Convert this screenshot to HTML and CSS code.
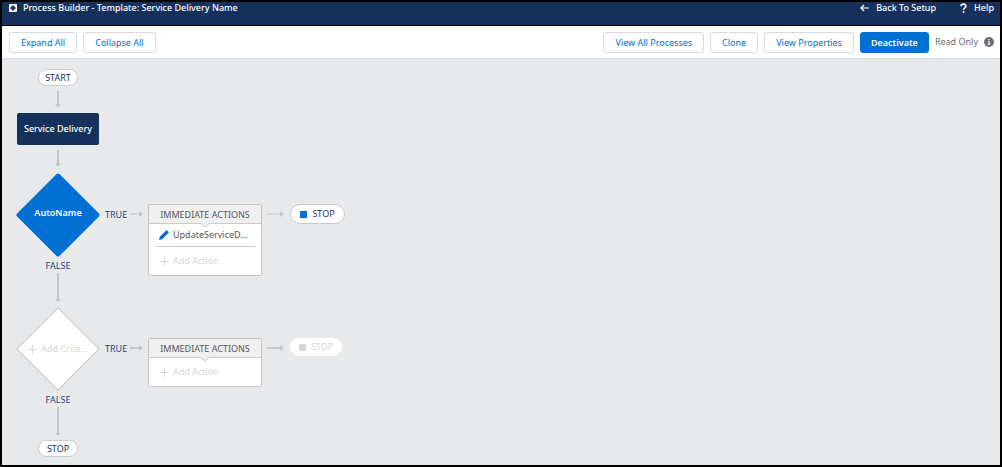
FILE: index.html
```html
<!DOCTYPE html>
<html lang="en">

<head>
    <meta charset="utf-8">
    <title>Process Builder</title>
    <link rel="stylesheet" href="styles.css">
</head>

<body>
    <header class="header">
        <svg class="logo" viewBox="0 0 8 8">
            <rect width="8" height="8" rx="1" fill="#fff" />
            <path d="M4 1L5.5 2.5 7 4 5.5 5.5 4 7 2.5 5.5 1 4 2.5 2.5z" fill="#16325c" />
            <path d="M3.5 3.5h1v1h-1z" fill="#fff" opacity=".3" />
        </svg>
        <h1 class="title">Process Builder - Template: Service Delivery Name</h1>
        <nav class="nav">
            <a href="#">
                <svg width="9" height="8" viewBox="0 0 9 8">
                    <path d="M9 4H1M4 1L1 4l3 3" fill="none" stroke="#fff" stroke-width="1.2" />
                </svg>
                Back To Setup
            </a>
            <a href="#">
                <svg width="7" height="10" viewBox="0 0 7 10">
                    <path d="M1 3.2C1 .4 6 .4 6 3.1 6 4.8 3.5 4.8 3.5 6.8" fill="none" stroke="#fff" stroke-width="1.6" />
                    <circle cx="3.5" cy="9" r="1" fill="#fff" />
                </svg>
                Help
            </a>
        </nav>
    </header>

    <div class="toolbar">
        <button class="btn">Expand All</button>
        <button class="btn">Collapse All</button>
        <div class="tools">
            <button class="btn">View All Processes</button>
            <button class="btn">Clone</button>
            <button class="btn">View Properties</button>
            <button class="btn primary">Deactivate</button>
            <span class="status">Read Only</span>
            <svg class="info" viewBox="0 0 10 10">
                <circle cx="5" cy="5" r="5" fill="#6b6d70" />
                <path d="M4.3 2h1.4v1.3H4.3zM4 4.2h1.7v2.6h.6v.9H3.8v-.9h.6V5H4z" fill="#fff" />
            </svg>
        </div>
    </div>

    <main class="canvas">
        <div class="column">
            <div class="pill">START</div>
            <svg class="arrow short" viewBox="0 0 6 17">
                <path d="M2 0h2v13h2L3 17 0 13h2z" />
            </svg>
            <div class="object">Service Delivery</div>
            <svg class="arrow short" viewBox="0 0 6 17">
                <path d="M2 0h2v13h2L3 17 0 13h2z" />
            </svg>
        </div>

        <div class="step">
            <div class="column">
                <div class="diamond">
                    <svg viewBox="0 0 84 84">
                        <path d="M42 2.5L81.5 42 42 81.5 2.5 42z" fill="#0070d2" stroke="#0070d2" stroke-width="4" stroke-linejoin="round" />
                    </svg>
                    <span class="name">AutoName</span>
                </div>
                <span class="label">FALSE</span>
                <svg class="arrow long" viewBox="0 0 6 29">
                    <path d="M2 0h2v26h2L3 29 0 26h2z" />
                </svg>
            </div>
            <div class="branch">
                <span class="label true">TRUE</span>
                <svg class="across in" viewBox="0 0 13 6">
                    <path d="M0 2.5h9V0l4 3-4 3V3.5H0z" />
                </svg>
                <div class="card">
                    <h2 class="card-title">IMMEDIATE ACTIONS</h2>
                    <svg class="notch" viewBox="0 0 10 5">
                        <path d="M0 0l5 4 5-4" />
                    </svg>
                    <a class="action" href="#">
                        <svg width="10" height="10" viewBox="0 0 10 10">
                            <path d="M0 10l.8-3.2L6.9.7q.7-.7 1.4 0l1 1q.7.7 0 1.4L3.2 9.2z" fill="#0070d2" />
                        </svg>
                        UpdateServiceD...
                    </a>
                    <button class="add">
                        <svg width="9" height="9" viewBox="0 0 9 9">
                            <path d="M4.5 0v9M0 4.5h9" stroke="#d4d6d8" />
                        </svg>
                        Add Action
                    </button>
                </div>
                <svg class="across out" viewBox="0 0 17 6">
                    <path d="M0 2.5h13V0l4 3-4 3V3.5H0z" />
                </svg>
                <div class="pill stop"><i class="square"></i>STOP</div>
            </div>
        </div>

        <div class="step">
            <div class="column">
                <div class="diamond">
                    <svg viewBox="0 0 84 84">
                        <path d="M42 2L82 42 42 82 2 42z" fill="#c9cbce" stroke="#c9cbce" stroke-width="3" stroke-linejoin="round" />
                        <path d="M42 3L81 42 42 81 3 42z" fill="#fff" stroke="#fff" stroke-width="2" stroke-linejoin="round" />
                    </svg>
                    <button class="add criteria">
                        <svg width="9" height="9" viewBox="0 0 9 9">
                            <path d="M4.5 0v9M0 4.5h9" stroke="#d4d6d8" />
                        </svg>
                        Add Crite...
                    </button>
                </div>
                <span class="label">FALSE</span>
                <svg class="arrow long" viewBox="0 0 6 29">
                    <path d="M2 0h2v26h2L3 29 0 26h2z" />
                </svg>
                <div class="pill">STOP</div>
            </div>
            <div class="branch">
                <span class="label true">TRUE</span>
                <svg class="across in" viewBox="0 0 13 6">
                    <path d="M0 2h9V0l4 3-4 3V4H0z" />
                </svg>
                <div class="card">
                    <h2 class="card-title">IMMEDIATE ACTIONS</h2>
                    <svg class="notch" viewBox="0 0 10 5">
                        <path d="M0 0l5 4 5-4" />
                    </svg>
                    <button class="add">
                        <svg width="9" height="9" viewBox="0 0 9 9">
                            <path d="M4.5 0v9M0 4.5h9" stroke="#d4d6d8" />
                        </svg>
                        Add Action
                    </button>
                </div>
                <svg class="across out" viewBox="0 0 17 6">
                    <path d="M0 2h13V0l4 3-4 3V4H0z" />
                </svg>
                <div class="pill stop off"><i class="square"></i>STOP</div>
            </div>
        </div>
    </main>
</body>

</html>
```
FILE: styles.css
```css
* {
    padding: 0;
    margin: 0;
    box-sizing: border-box;
}

body {
    display: flex;
    flex-direction: column;
    min-height: 100vh;
    border: 2px solid #000;
    background: #e8e9eb;
    font: 9px/12px "Noto Sans", "Open Sans", sans-serif;
    color: #16325c;
}

svg {
    flex: none;
    display: block;
}

a {
    color: inherit;
    text-decoration: none;
}

button {
    font: inherit;
    cursor: pointer;
}

/* top bar */
.header {
    display: flex;
    align-items: flex-start;
    height: 24px;
    padding: 0 6px 0 7px;
    border-bottom: 1px solid #000;
    background: #16325c;
    color: #fff;
    font-weight: 500;
}

.logo {
    width: 8px;
    height: 8px;
    margin: 2px 6px 0 0;
}

.title {
    font-size: 9px;
    font-weight: 500;
}

.nav {
    display: flex;
    gap: 24px;
    margin-left: auto;
}

.nav a {
    display: flex;
    align-items: center;
    gap: 7px;
}

/* buttons */
.toolbar {
    display: flex;
    align-items: center;
    gap: 6px;
    height: 33px;
    padding: 0 6px 0 7px;
    border-bottom: 1px solid #d8dde6;
    background: #fff;
}

.tools {
    display: flex;
    align-items: center;
    gap: 6px;
    margin-left: auto;
}

.btn {
    height: 21px;
    padding: 1px 11px 0;
    border: 1px solid #d8dadd;
    border-radius: 3px;
    background: #fff;
    color: #0070d2;
}

.primary {
    padding: 1px 10px 0;
    border-color: #0070d2;
    background: #0070d2;
    color: #fff;
    font-weight: 600;
}

.status {
    color: #6b6d70;
}

.info {
    width: 10px;
    height: 10px;
}

/* flow */
.canvas {
    flex: 1;
    padding: 10px 14px 8px;
}

.column {
    display: flex;
    flex-direction: column;
    align-items: center;
    width: 84px;
}

.step {
    display: flex;
    align-items: flex-start;
    margin-top: 1px;
}

.pill {
    display: flex;
    align-items: center;
    justify-content: center;
    width: 40px;
    height: 17px;
    border: 1px solid #c9cbce;
    border-radius: 10px;
    background: #fff;
}

.arrow,
.across {
    fill: #c4c6c8;
}

.arrow {
    width: 6px;
}

.short {
    height: 17px;
    margin: 5px 0;
}

.long {
    height: 29px;
    margin: 0 0 4px;
}

.object {
    width: 82px;
    border-radius: 2px;
    background: #16325c;
    color: #fff;
    font-weight: 500;
    line-height: 32px;
    text-align: center;
}

.diamond {
    display: grid;
    place-items: center;
    width: 84px;
    height: 84px;
}

.diamond > * {
    grid-area: 1 / 1;
}

.diamond > svg {
    width: 84px;
    height: 84px;
}

.name {
    color: #fff;
    font-weight: 600;
    padding-bottom: 4px;
}

.label {
    padding-top: 2px;
    color: #1b4a7c;
    line-height: 14px;
}

.branch {
    display: flex;
    align-items: flex-start;
    padding-top: 31px;
}

.true {
    width: 25px;
    margin-left: 5px;
    line-height: 18px;
}

.across {
    height: 6px;
    margin-top: 7px;
}

.in {
    width: 13px;
    margin-right: 5px;
}

.out {
    width: 17px;
    margin-left: 5px;
    margin-right: 6px;
}

.card {
    width: 114px;
    padding-bottom: 4px;
    border: 1px solid #c4c6ca;
    border-radius: 2px;
    background: #fff;
    color: #54565b;
}

.card-title {
    padding-top: 2px;
    border-bottom: 1px solid #c9cbce;
    background: #f0f0f0;
    font-size: 9px;
    font-weight: 400;
    line-height: 16px;
    text-align: center;
}

.notch {
    width: 10px;
    height: 5px;
    margin: -1px auto 0;
    fill: #f0f0f0;
    stroke: #c9cbce;
}

.action {
    display: flex;
    align-items: center;
    gap: 4px;
    height: 19px;
    margin: 0 6px 4px;
    padding: 0 0 4px 4px;
    border-bottom: 1px solid #c9cbce;
}

.add {
    display: flex;
    align-items: center;
    gap: 4px;
    height: 20px;
    margin-left: 11px;
    border: 0;
    background: none;
    color: #d4d6d8;
}

.criteria {
    margin: 0;
}

.stop {
    gap: 5px;
    width: 55px;
    height: 20px;
}

.square {
    width: 7px;
    height: 7px;
    background: #0070d2;
}

.off {
    width: 52px;
    height: 18px;
    border-color: #fff;
    color: #d4d6d8;
}

.off .square {
    background: #d4d6d8;
}
```
